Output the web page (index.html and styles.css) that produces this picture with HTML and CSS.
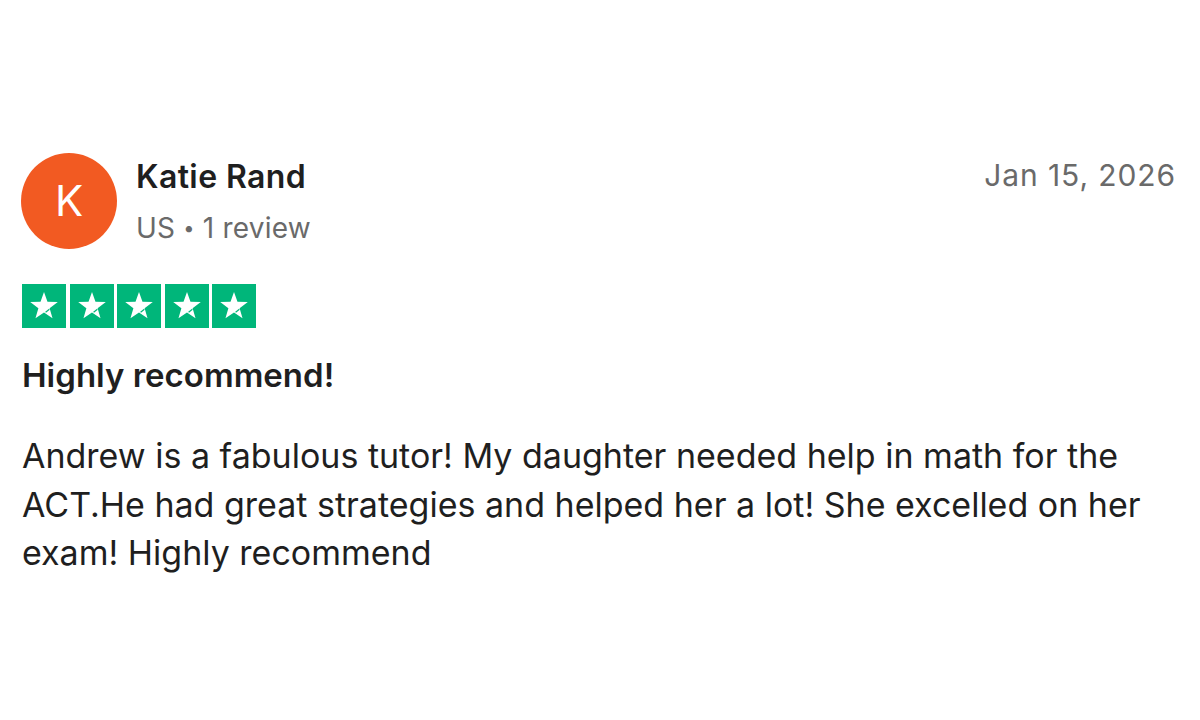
FILE: index.html
```html
<!DOCTYPE html>
<html lang="en">
<head>
<meta charset="utf-8">
<title>Review</title>
<link rel="stylesheet" href="styles.css">
</head>
<body>
<article class="review">
  <header class="review-header">
    <div class="avatar">K</div>
    <div class="consumer">
      <div class="consumer-name">Katie Rand</div>
      <div class="consumer-meta">US <span class="dot">•</span> 1 review</div>
    </div>
    <time class="review-date">Jan 15, 2026</time>
  </header>
  <div class="stars" aria-label="Rated 5 out of 5">
    <svg class="star" viewBox="0 0 44 44"><rect width="44" height="44" fill="#00b67a"/><polygon fill="#fff" points="22,8 25.47,17.73 35.79,18.02 27.61,24.32 30.53,34.23 22,28.4 13.47,34.23 16.39,24.32 8.21,18.02 18.53,17.73"/><line x1="27.4" y1="25.2" x2="23.6" y2="28.2" stroke="#00b67a" stroke-width="1.2"/></svg>
    <svg class="star" viewBox="0 0 44 44"><rect width="44" height="44" fill="#00b67a"/><polygon fill="#fff" points="22,8 25.47,17.73 35.79,18.02 27.61,24.32 30.53,34.23 22,28.4 13.47,34.23 16.39,24.32 8.21,18.02 18.53,17.73"/><line x1="27.4" y1="25.2" x2="23.6" y2="28.2" stroke="#00b67a" stroke-width="1.2"/></svg>
    <svg class="star" viewBox="0 0 44 44"><rect width="44" height="44" fill="#00b67a"/><polygon fill="#fff" points="22,8 25.47,17.73 35.79,18.02 27.61,24.32 30.53,34.23 22,28.4 13.47,34.23 16.39,24.32 8.21,18.02 18.53,17.73"/><line x1="27.4" y1="25.2" x2="23.6" y2="28.2" stroke="#00b67a" stroke-width="1.2"/></svg>
    <svg class="star" viewBox="0 0 44 44"><rect width="44" height="44" fill="#00b67a"/><polygon fill="#fff" points="22,8 25.47,17.73 35.79,18.02 27.61,24.32 30.53,34.23 22,28.4 13.47,34.23 16.39,24.32 8.21,18.02 18.53,17.73"/><line x1="27.4" y1="25.2" x2="23.6" y2="28.2" stroke="#00b67a" stroke-width="1.2"/></svg>
    <svg class="star" viewBox="0 0 44 44"><rect width="44" height="44" fill="#00b67a"/><polygon fill="#fff" points="22,8 25.47,17.73 35.79,18.02 27.61,24.32 30.53,34.23 22,28.4 13.47,34.23 16.39,24.32 8.21,18.02 18.53,17.73"/><line x1="27.4" y1="25.2" x2="23.6" y2="28.2" stroke="#00b67a" stroke-width="1.2"/></svg>
  </div>
  <h2 class="review-title">Highly recommend!</h2>
  <p class="review-text">Andrew is a fabulous tutor! My daughter needed help in math for the ACT.He had great strategies and helped her a lot! She excelled on her exam! Highly recommend</p>
</article>
</body>
</html>
```
FILE: styles.css
```css
html, body {
  margin: 0;
  padding: 0;
  background: #ffffff;
}

body {
  font-family: Inter, "Noto Sans", "Liberation Sans", sans-serif;
  color: #1f1f1f;
  width: 1200px;
  height: 720px;
  overflow: hidden;
}

.review {
  padding: 153px 24px 0 21px;
}

.review-header {
  display: flex;
  align-items: flex-start;
}

.avatar {
  width: 96px;
  height: 96px;
  border-radius: 50%;
  background: #f25a22;
  color: #ffffff;
  font-size: 42px;
  line-height: 96px;
  text-align: center;
  flex: none;
}

.consumer {
  margin-left: 19px;
  padding-top: 5px;
  display: flex;
  flex-direction: column;
  gap: 15px;
}

.consumer-name {
  font-size: 32px;
  line-height: 38px;
  font-weight: 600;
  color: #1f1f1f;
  letter-spacing: 0.4px;
}

.consumer-meta {
  font-size: 28px;
  line-height: 34px;
  color: #6a6a6a;
  letter-spacing: 0.2px;
}

.dot {
  font-size: 20px;
  vertical-align: 3px;
}

.review-date {
  margin-left: auto;
  padding-top: 4px;
  font-size: 30px;
  line-height: 36px;
  color: #6a6a6a;
  letter-spacing: 0.9px;
}

.stars {
  display: flex;
  gap: 3.5px;
  margin-top: 35px;
  margin-left: 1px;
}

.star {
  width: 44px;
  height: 44px;
  display: block;
}

.review-title {
  margin: 27px 0 0 1px;
  font-size: 33px;
  line-height: 40px;
  font-weight: 600;
  color: #1f1f1f;
  letter-spacing: 0;
}

.review-text {
  margin: 37px 0 0 1px;
  font-size: 34px;
  line-height: 48.5px;
  color: #1f1f1f;
  max-width: 1130px;
  letter-spacing: 0;
}
```
